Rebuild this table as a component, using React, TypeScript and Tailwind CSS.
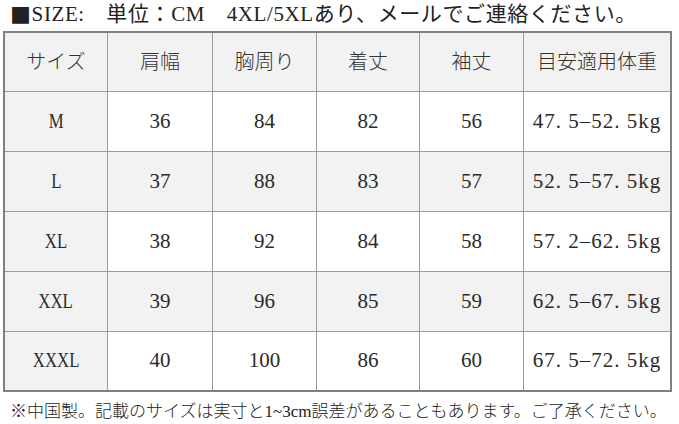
import React from "react";

const header = ["サイズ", "肩幅", "胸周り", "着丈", "袖丈", "目安適用体重"];
const rows: string[][] = [
  ["M", "36", "84", "82", "56", "47. 5–52. 5kg"],
  ["L", "37", "88", "83", "57", "52. 5–57. 5kg"],
  ["XL", "38", "92", "84", "58", "57. 2–62. 5kg"],
  ["XXL", "39", "96", "85", "59", "62. 5–67. 5kg"],
  ["XXXL", "40", "100", "86", "60", "67. 5–72. 5kg"],
];

export default function App() {
  return (
    <div className="w-[679px] h-[424px] bg-white overflow-hidden text-[#2a2a2a] font-['Liberation_Serif','Noto_Sans_CJK_JP',serif]">
      <div className="h-[31px] pt-[2px] pl-[10px] flex items-start text-[21px] leading-[24px] whitespace-pre text-[#222] tracking-[0.6px]">
        <span className="font-['Noto_Sans_CJK_JP',sans-serif]">■</span>
        <span>SIZE:　単位：CM　4XL/5XLあり、メールでご連絡ください。</span>
      </div>
      <div className="ml-[3px] w-[669px] border-2 border-[#808080]">
        <div className="grid grid-cols-[103px_105px_104px_103px_104px_146px] grid-rows-[59px_60px_60px_60px_60px_58px]">
          {header.map((h, i) => (
            <div
              key={"h" + i}
              className={`flex items-center justify-center bg-[#f2f2f2] border-b border-[#9a9a9a] text-[20px] font-light text-[#333] ${i < 5 ? "border-r" : ""}`}
            >
              {h}
            </div>
          ))}
          {rows.map((r, ri) =>
            r.map((c, ci) => {
              const gray = ci === 0 || ri % 2 === 1;
              const last = ri === rows.length - 1;
              return (
                <div
                  key={ri + "-" + ci}
                  className={`flex items-center justify-center border-[#9a9a9a] text-[21px] ${gray ? "bg-[#f2f2f2]" : "bg-white"} ${ci < 5 ? "border-r" : ""} ${last ? "" : "border-b"} ${ci === 5 ? "tracking-[1px]" : ""}`}
                >
                  <span className={`whitespace-pre inline-block ${ci === 0 ? "scale-x-[0.8]" : ""}`}>{c}</span>
                </div>
              );
            })
          )}
        </div>
      </div>
      <div className="h-[32px] pt-[8px] pl-[10px] flex items-center text-[17px] font-light leading-[24px] whitespace-pre text-[#222]">
        ※中国製。記載のサイズは実寸と1~3cm誤差があることもあります。ご了承ください。
      </div>
    </div>
  );
}
